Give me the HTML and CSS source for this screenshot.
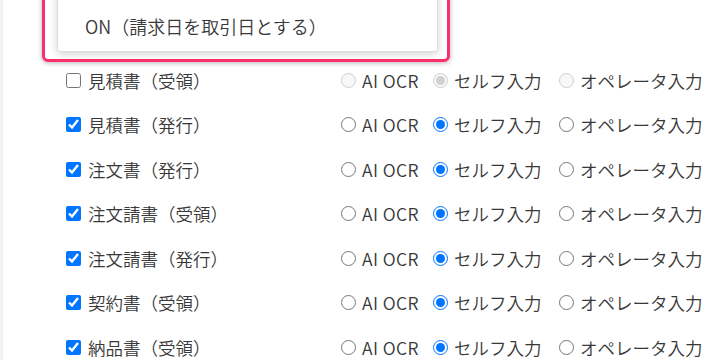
FILE: index.html
```html
<!DOCTYPE html>
<html lang="ja">
<head>
<meta charset="utf-8">
<link rel="stylesheet" href="styles.css">
</head>
<body>
<div class="page">
  <div class="list">
    <div class="row">
      <label class="doc"><input type="checkbox">見積書（受領）</label>
      <div class="modes">
        <label class="opt off"><input type="radio" name="r1" disabled>AI OCR</label>
        <label class="opt off"><input type="radio" name="r1" checked disabled>セルフ入力</label>
        <label class="opt off"><input type="radio" name="r1" disabled>オペレータ入力</label>
      </div>
    </div>
    <div class="row">
      <label class="doc"><input type="checkbox" checked>見積書（発行）</label>
      <div class="modes">
        <label class="opt"><input type="radio" name="r2">AI OCR</label>
        <label class="opt"><input type="radio" name="r2" checked>セルフ入力</label>
        <label class="opt"><input type="radio" name="r2">オペレータ入力</label>
      </div>
    </div>
    <div class="row">
      <label class="doc"><input type="checkbox" checked>注文書（発行）</label>
      <div class="modes">
        <label class="opt"><input type="radio" name="r3">AI OCR</label>
        <label class="opt"><input type="radio" name="r3" checked>セルフ入力</label>
        <label class="opt"><input type="radio" name="r3">オペレータ入力</label>
      </div>
    </div>
    <div class="row">
      <label class="doc"><input type="checkbox" checked>注文請書（受領）</label>
      <div class="modes">
        <label class="opt"><input type="radio" name="r4">AI OCR</label>
        <label class="opt"><input type="radio" name="r4" checked>セルフ入力</label>
        <label class="opt"><input type="radio" name="r4">オペレータ入力</label>
      </div>
    </div>
    <div class="row">
      <label class="doc"><input type="checkbox" checked>注文請書（発行）</label>
      <div class="modes">
        <label class="opt"><input type="radio" name="r5">AI OCR</label>
        <label class="opt"><input type="radio" name="r5" checked>セルフ入力</label>
        <label class="opt"><input type="radio" name="r5">オペレータ入力</label>
      </div>
    </div>
    <div class="row">
      <label class="doc"><input type="checkbox" checked>契約書（受領）</label>
      <div class="modes">
        <label class="opt"><input type="radio" name="r6">AI OCR</label>
        <label class="opt"><input type="radio" name="r6" checked>セルフ入力</label>
        <label class="opt"><input type="radio" name="r6">オペレータ入力</label>
      </div>
    </div>
    <div class="row">
      <label class="doc"><input type="checkbox" checked>納品書（受領）</label>
      <div class="modes">
        <label class="opt"><input type="radio" name="r7">AI OCR</label>
        <label class="opt"><input type="radio" name="r7" checked>セルフ入力</label>
        <label class="opt"><input type="radio" name="r7">オペレータ入力</label>
      </div>
    </div>
  </div>
  <div class="highlight">
    <div class="dropdown">
      <div class="item">ON（請求日を取引日とする）</div>
    </div>
  </div>
</div>
</body>
</html>
```

FILE: styles.css
```css
html, body {
  margin: 0;
  padding: 0;
  background: #ffffff;
}
body {
  font-family: "Noto Sans CJK JP", "Noto Sans", sans-serif;
  font-weight: 350;
  color: #383838;
  overflow: hidden;
}
.page {
  position: relative;
  width: 720px;
  height: 360px;
  overflow: hidden;
  border-left: 3px solid #f2f2f2;
  box-sizing: border-box;
}
.list {
  padding-top: 58px;
  padding-left: 63px;
}
.row {
  height: 44.5px;
  display: flex;
  align-items: center;
  font-size: 17.5px;
}
.doc {
  width: 275px;
  display: flex;
  align-items: center;
  gap: 7px;
}
.modes {
  display: grid;
  grid-template-columns: 92px 126px auto;
  align-items: center;
}
.opt {
  display: flex;
  align-items: center;
  gap: 6px;
  white-space: nowrap;
}
.opt:first-child {
  letter-spacing: 0.4px;
}
input {
  margin: 0;
  width: 15px;
  height: 15px;
  flex: none;
}
.highlight {
  position: absolute;
  left: 39px;
  top: -20px;
  width: 402px;
  height: 76px;
  border: 3px solid #fc2f6d;
  border-radius: 6px;
  background: #ffffff;
  box-shadow: 0 1px 5px rgba(0, 0, 0, 0.3);
  overflow: hidden;
}
.dropdown {
  position: absolute;
  left: 12px;
  right: 9px;
  bottom: 7px;
  height: 70px;
  background: #ffffff;
  border: 1px solid #dddddd;
  border-radius: 3px;
  box-shadow: 0 2px 8px rgba(0, 0, 0, 0.18);
  box-sizing: border-box;
}
.item {
  position: absolute;
  left: 27px;
  bottom: 13px;
  font-size: 18px;
  line-height: 24px;
}
```
